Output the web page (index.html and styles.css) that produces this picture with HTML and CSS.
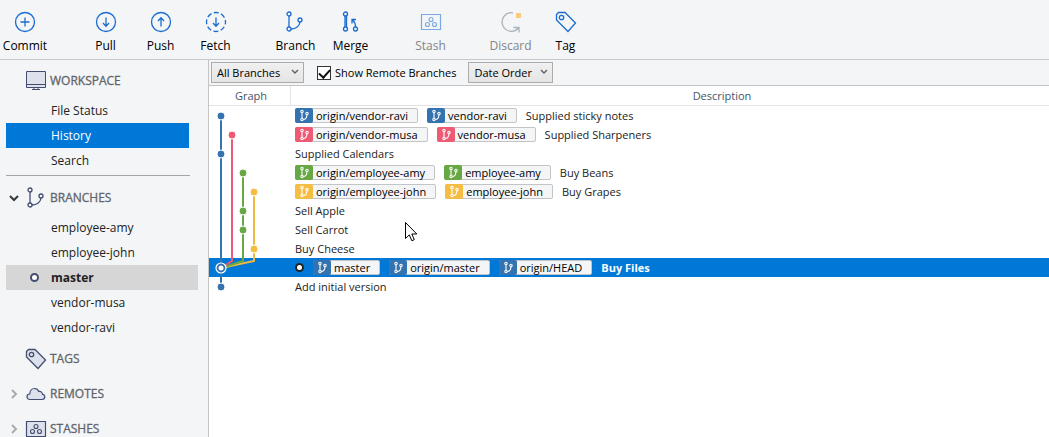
FILE: index.html
```
<!DOCTYPE html>
<html lang="en">
<head>
<meta charset="utf-8">
<title>History</title>
<link rel="stylesheet" href="styles.css">
</head>
<body>
<svg class="defs" aria-hidden="true">
  <symbol id="branch" viewBox="0 0 22 22"><g fill="none" stroke="currentColor" stroke-width="1.3"><circle cx="4" cy="3" r="2"/><circle cx="4" cy="18" r="2"/><circle cx="15" cy="9" r="2"/><path d="M4 5v11M6 18c5 0 8.500-3 9-7"/></g></symbol>
  <symbol id="mini" viewBox="0 0 18 15"><g fill="none" stroke="currentColor" stroke-width="1.1"><circle cx="7" cy="3.500" r="1.200"/><circle cx="7" cy="11.500" r="1.200"/><circle cx="12" cy="5.500" r="1.200"/><path d="M7 4.700v5.600M8.200 11.500c2.500 0 3.600-1.800 3.800-4.700"/></g></symbol>
  <symbol id="tag" viewBox="0 0 22 22"><path class="body" d="M1.500 3.500l2-2h6.500L20.500 12 13 20.500 1.500 9z" stroke="currentColor" stroke-width="1.300"/><circle cx="6.500" cy="6.500" r="2.200" fill="none" stroke="currentColor" stroke-width="1.300"/></symbol>
  <symbol id="stash" viewBox="0 0 22 22"><path class="body" d="M1.500 3.500h19v15h-19z" stroke="currentColor" stroke-width="1.200"/><g fill="none" stroke="currentColor" stroke-width="1.100"><circle cx="11" cy="8.500" r="2"/><circle cx="7.500" cy="13.500" r="2"/><circle cx="14.500" cy="13.500" r="2"/></g></symbol>
</svg>
<header class="toolbar">
  <button class="tool commit"><svg viewBox="0 0 22 22"><circle cx="11" cy="11" r="9.500"/><path d="M11 6.500v9M6.500 11h9"/></svg>Commit</button>
  <div class="group">
    <button class="tool"><svg viewBox="0 0 22 22"><circle cx="11" cy="11" r="9.500"/><path d="M11 6.500v8.500M8 12l3 3.200 3-3.200"/></svg>Pull</button>
    <button class="tool"><svg viewBox="0 0 22 22"><circle cx="11" cy="11" r="9.500"/><path d="M11 15.500V7M8 10l3-3.200 3 3.200"/></svg>Push</button>
    <button class="tool"><svg viewBox="0 0 22 22"><circle cx="11" cy="11" r="9.500" stroke-dasharray="5 2.460" stroke-dashoffset="2.500"/><path d="M11 6.500v8.500M8 12l3 3.200 3-3.200"/></svg>Fetch</button>
  </div>
  <div class="group">
    <button class="tool"><svg viewBox="0 0 22 22"><use href="#branch"/></svg>Branch</button>
    <button class="tool"><svg viewBox="0 0 22 22"><circle cx="5.500" cy="3" r="2"/><circle cx="5.500" cy="18" r="2"/><circle cx="15.500" cy="18" r="2"/><path d="M5 5v11M6.500 5v11M15.500 16c.2-3-.8-5-3-7.500M12 12.500V8.500h4"/></svg>Merge</button>
  </div>
  <button class="tool" disabled><svg viewBox="0 0 22 22"><use href="#stash"/></svg>Stash</button>
  <div class="group">
    <button class="tool" disabled><svg class="discard" viewBox="0 0 22 22"><path d="M13 1.800A9.300 9.300 0 1 0 18.500 17M13.500 16.500h5.500v5"/><rect x="16" y="2" width="5" height="5"/></svg>Discard</button>
    <button class="tool"><svg viewBox="0 0 22 22"><use href="#tag"/></svg>Tag</button>
  </div>
</header>
<div class="workarea">
  <nav class="sidebar">
    <h2 class="heading first"><svg class="icon" viewBox="0 0 22 22"><path class="body" d="M1.500 1.500h19v16h-19z" stroke="currentColor"/><path d="M1 14.500h20M9 17.500v2M13 17.500v2M7 19.500h8" fill="none" stroke="currentColor"/></svg>WORKSPACE</h2>
    <ul class="list">
      <li><a href="#status">File Status</a></li>
      <li><a href="#history" class="active" aria-current="page">History</a></li>
      <li><a href="#search">Search</a></li>
    </ul>
    <hr class="rule">
    <h2 class="heading branches"><svg class="twist open" viewBox="0 0 10 10"><path d="M1 3l4 4 4-4"/></svg><svg class="icon plain" viewBox="-1 0 22 22"><use href="#branch" width="22" height="22"/></svg>BRANCHES</h2>
    <ul class="list">
      <li><a href="#employee-amy">employee-amy</a></li>
      <li><a href="#employee-john">employee-john</a></li>
      <li><a href="#master" class="current"><span class="ring"></span>master</a></li>
      <li><a href="#vendor-musa">vendor-musa</a></li>
      <li><a href="#vendor-ravi">vendor-ravi</a></li>
    </ul>
    <h2 class="heading tags"><svg class="icon" viewBox="0 0 22 22"><use href="#tag"/></svg>TAGS</h2>
    <h2 class="heading"><svg class="twist" viewBox="0 0 10 10"><path d="M3 1l4 4-4 4"/></svg><svg class="icon" viewBox="0 0 22 22"><path class="body" d="M5 16.500c-2 0-3-1.300-3-2.800 0-1.700 1.300-2.700 2.800-2.700C4.800 7.500 7 5.500 9.500 5.500c2.200 0 3.700 1.200 4.300 3 2.200-.3 3.700 1 3.700 2.800 1.500.2 2.300 1.200 2.300 2.500 0 1.600-1.100 2.700-2.800 2.700z" stroke="currentColor" stroke-width="1.200"/></svg>REMOTES</h2>
    <h2 class="heading"><svg class="twist" viewBox="0 0 10 10"><path d="M3 1l4 4-4 4"/></svg><svg class="icon" viewBox="0 0 22 22"><use href="#stash"/></svg>STASHES</h2>
  </nav>
  <main class="main">
    <div class="filters">
      <div class="picker scope"><select aria-label="Branches"><option>All Branches</option></select><svg viewBox="0 0 8 6"><path d="M1 1l3 3 3-3"/></svg></div>
      <label class="check"><input type="checkbox" checked>Show Remote Branches</label>
      <div class="picker"><select aria-label="Order"><option>Date Order</option></select><svg viewBox="0 0 8 6"><path d="M1 1l3 3 3-3"/></svg></div>
    </div>
    <div class="log">
      <table class="commits">
        <thead><tr><th class="graphcol">Graph</th><th class="desccol">Description</th></tr></thead>
        <tbody>
          <tr><td></td><td><div class="line"><span class="ref blue"><svg><use href="#mini"/></svg>origin/vendor-ravi</span><span class="ref blue"><svg><use href="#mini"/></svg>vendor-ravi</span><span>Supplied sticky notes</span></div></td></tr>
          <tr><td></td><td><div class="line"><span class="ref red"><svg><use href="#mini"/></svg>origin/vendor-musa</span><span class="ref red"><svg><use href="#mini"/></svg>vendor-musa</span><span>Supplied Sharpeners</span></div></td></tr>
          <tr><td></td><td><div class="line"><span>Supplied Calendars</span></div></td></tr>
          <tr><td></td><td><div class="line"><span class="ref green"><svg><use href="#mini"/></svg>origin/employee-amy</span><span class="ref green"><svg><use href="#mini"/></svg>employee-amy</span><span>Buy Beans</span></div></td></tr>
          <tr><td></td><td><div class="line"><span class="ref gold"><svg><use href="#mini"/></svg>origin/employee-john</span><span class="ref gold"><svg><use href="#mini"/></svg>employee-john</span><span>Buy Grapes</span></div></td></tr>
          <tr><td></td><td><div class="line"><span>Sell Apple</span></div></td></tr>
          <tr><td></td><td><div class="line"><span>Sell Carrot</span></div></td></tr>
          <tr><td></td><td><div class="line"><span>Buy Cheese</span></div></td></tr>
          <tr class="selected"><td></td><td><div class="line"><span class="ring head"></span><span class="ref blue"><svg><use href="#mini"/></svg>master</span><span class="ref blue"><svg><use href="#mini"/></svg>origin/master</span><span class="ref blue"><svg><use href="#mini"/></svg>origin/HEAD</span><strong>Buy Files</strong></div></td></tr>
          <tr><td></td><td><div class="line"><span>Add initial version</span></div></td></tr>
        </tbody>
      </table>
      <svg class="graph" viewBox="0 0 81 190" aria-hidden="true">
        <g fill="none" stroke-width="2">
          <path stroke="#f0b93f" d="M45 86v69L12 162"/>
          <path stroke="#67a744" d="M34 67v88L12 162"/>
          <path stroke="#ee5a74" d="M23 29v126L12 162"/>
          <path stroke="#3572b0" d="M12 10v171"/>
        </g>
        <g stroke="#fff">
          <g fill="#3572b0"><circle cx="12" cy="10" r="4"/><circle cx="12" cy="48" r="4"/><circle cx="12" cy="181" r="4"/></g>
          <circle fill="#ee5a74" cx="23" cy="29" r="4"/>
          <g fill="#67a744"><circle cx="34" cy="67" r="4"/><circle cx="34" cy="105" r="4"/><circle cx="34" cy="124" r="4"/></g>
          <g fill="#f5bd41"><circle cx="45" cy="86" r="4"/><circle cx="45" cy="143" r="4"/></g>
        </g>
        <circle cx="12" cy="162" r="5" fill="#3572b0" stroke="#fff" stroke-width="1.200"/><circle cx="12" cy="162" r="2.500" fill="#fff"/>
      </svg>
      <svg class="pointer" viewBox="0 0 13 20" aria-hidden="true"><path d="M.5.500v16l3.800-3.600 2.500 5.800 2.500-1-2.500-5.700h5z" fill="#fff" stroke="#000"/></svg>
    </div>
  </main>
</div>
</body>
</html>
```
FILE: styles.css
```
* { box-sizing: border-box; }
body {
  margin: 0;
  height: 100vh;
  overflow: hidden;
  display: flex;
  flex-direction: column;
  background: #f3f5f7;
  color: #222;
  font: 12px/18px "Open Sans", "Noto Sans", sans-serif;
}
button, select, input { font: inherit; color: inherit; margin: 0; }
.defs { position: absolute; width: 0; height: 0; }

.toolbar {
  display: flex;
  gap: 25px;
  flex: none;
  height: 60px;
  border-bottom: 1px solid #c8c8c8;
}
.group { display: flex; }
.tool {
  width: 55px;
  padding: 11px 0 0;
  border: 0;
  background: none;
  color: #000;
  display: flex;
  flex-direction: column;
  align-items: center;
  gap: 4px;
}
.commit { width: 50px; margin-right: 3px; }
.tool svg {
  width: 22px;
  height: 22px;
  color: #1a6cd0;
  stroke: currentColor;
  stroke-width: 1.3;
  fill: none;
}
.tool:disabled { color: #838588; }
.tool:disabled svg { color: #78a9e4; }
.tool .discard { stroke: #aab3bb; }
.discard rect { fill: #fbc982; stroke: none; }

.workarea { display: flex; flex: 1; min-height: 0; }
.sidebar {
  flex: none;
  width: 209px;
  padding-left: 6px;
  overflow: hidden;
  border-right: 1px solid #c4c4c4;
}
.heading {
  display: flex;
  align-items: center;
  gap: 3px;
  height: 35px;
  margin: 0;
  padding-left: 19px;
  position: relative;
  font-size: 12px;
  font-weight: 400;
  color: #626469;
  -webkit-text-stroke: 0.3px;
}
.first { padding-top: 4px; height: 38px; }
.branches { height: 34px; }
.tags { height: 36px; padding-top: 1px; }
.icon { width: 22px; height: 22px; color: #444d70; fill: #dde1eb; }
.body { fill: inherit; }
.twist {
  position: absolute;
  left: 3px;
  width: 10px;
  height: 10px;
  fill: none;
  stroke: #a8acae;
  stroke-width: 2;
}
.open { stroke: #33383f; }
.list { list-style: none; margin: 0; padding: 0; }
.list a {
  display: flex;
  align-items: center;
  height: 25px;
  margin-right: 10px;
  padding-left: 45px;
  color: #222;
  text-decoration: none;
}
.list .active { background: #0078d7; color: #fff; margin-right: 19px; }
.list .current { background: #d6d6d6; font-weight: 700; padding-left: 24px; gap: 12px; }
.ring {
  width: 9px;
  height: 9px;
  border: 2px solid #444d70;
  border-radius: 50%;
  background: #fff;
}
.rule { margin: 2px 18px 5px 0; border: 0; border-top: 1px solid #a5a5a5; }

.main { flex: 1; min-width: 0; display: flex; flex-direction: column; background: #fff; }
.filters {
  display: flex;
  align-items: center;
  height: 26px;
  padding: 0 2px;
  background: #f3f5f7;
  border-bottom: 1px solid #c4c4c4;
}
.picker { position: relative; width: 85px; }
.scope { width: 93px; }
.picker select {
  appearance: none;
  width: 100%;
  height: 21px;
  padding: 0 5px;
  border: 1px solid #acacac;
  border-radius: 0;
  background: linear-gradient(#f0f0f0, #e5e5e5);
  color: #000;
  font-size: 11px;
  display: block;
}
.picker svg {
  position: absolute;
  right: 5px;
  top: 7px;
  width: 8px;
  height: 6px;
  fill: none;
  stroke: #606060;
  stroke-width: 1.4;
  pointer-events: none;
}
.check {
  display: flex;
  align-items: center;
  gap: 4px;
  margin: 0 12px 0 13px;
  color: #000;
  font-size: 11px;
  white-space: nowrap;
}
.check input {
  appearance: none;
  width: 14px;
  height: 14px;
  border: 1px solid #333;
  background: #fff;
  display: grid;
  place-items: center;
}
.check input:checked::before {
  content: "";
  width: 5px;
  height: 9px;
  margin-bottom: 2px;
  border: solid #111;
  border-width: 0 2px 2px 0;
  transform: rotate(42deg);
}

.log { position: relative; flex: 1; min-height: 0; }
.commits { width: 100%; table-layout: fixed; border-collapse: separate; border-spacing: 0; font-size: 11px; }
.commits th {
  height: 20px;
  padding: 0;
  font-weight: 400;
  color: #44546a;
  border-bottom: 1px solid #e3e3e3;
}
.commits .graphcol { width: 82px; padding-left: 3px; border-right: 1px solid #e3e3e3; }
.commits .desccol { padding-left: 104px; }
.commits td { height: 19px; padding: 0 0 0 4px; }
.line { display: flex; align-items: center; gap: 9px; height: 19px; white-space: nowrap; }
.ref {
  display: flex;
  align-items: center;
  height: 15px;
  padding-right: 9px;
  border: 1px solid #c2c4c6;
  border-radius: 2px;
  background: #f3f5f7;
  color: #000;
}
.ref svg { width: 18px; height: 15px; margin: -1px 3px -1px -1px; border-radius: 2px; color: #fff; }
.blue svg { background: #3572b0; }
.red svg { background: #ee5a74; }
.green svg { background: #67a744; }
.gold svg { background: #f5bd41; }
.selected { background: #0078d7; color: #fff; }
.head { border-color: #222; }
.graph { position: absolute; left: 0; top: 20px; width: 81px; height: 190px; pointer-events: none; }
.pointer { position: absolute; left: 196px; top: 136px; width: 13px; height: 20px; pointer-events: none; }
```
